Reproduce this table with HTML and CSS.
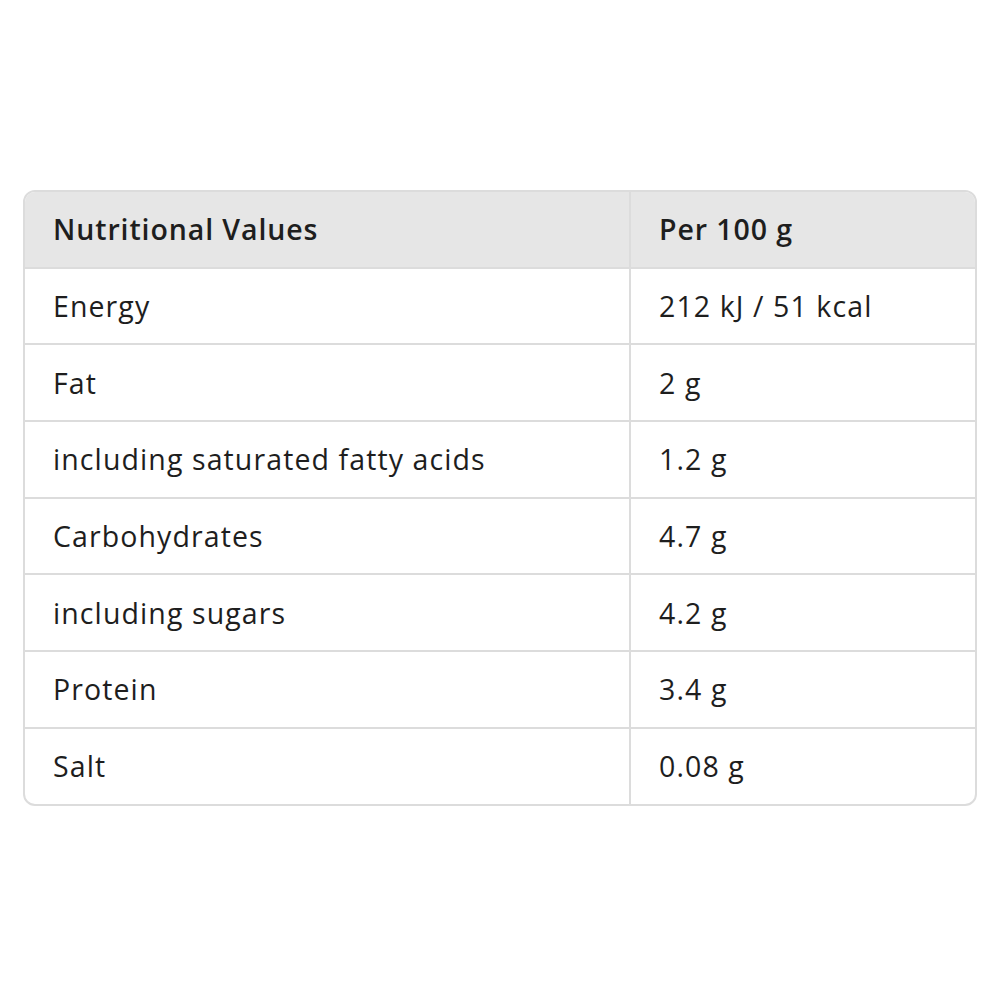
FILE: index.html
```html
<!DOCTYPE html>
<html>
<head>
<meta charset="utf-8">
<link rel="stylesheet" href="styles.css">
</head>
<body>
<div class="page">
  <div class="card">
    <table class="nutri">
      <thead>
        <tr><th class="c1">Nutritional Values</th><th class="c2">Per 100 g</th></tr>
      </thead>
      <tbody>
        <tr><td class="c1">Energy</td><td class="c2">212 kJ / 51 kcal</td></tr>
        <tr><td class="c1">Fat</td><td class="c2">2 g</td></tr>
        <tr><td class="c1">including saturated fatty acids</td><td class="c2">1.2 g</td></tr>
        <tr><td class="c1">Carbohydrates</td><td class="c2">4.7 g</td></tr>
        <tr><td class="c1">including sugars</td><td class="c2">4.2 g</td></tr>
        <tr><td class="c1">Protein</td><td class="c2">3.4 g</td></tr>
        <tr><td class="c1">Salt</td><td class="c2">0.08 g</td></tr>
      </tbody>
    </table>
  </div>
</div>
</body>
</html>
```

FILE: styles.css
```css
html, body {
  margin: 0;
  padding: 0;
  background: #ffffff;
}
.page {
  width: 1000px;
  height: 1000px;
  padding: 190px 23px 0 23px;
  box-sizing: border-box;
}
.card {
  border: 2px solid #dcdcdc;
  border-radius: 12px;
  overflow: hidden;
}
.nutri {
  width: 100%;
  border-collapse: collapse;
  font-family: "Open Sans", "Noto Sans", sans-serif;
  font-size: 28.5px;
  letter-spacing: 1.1px;
  color: #1e1e1e;
}
.nutri th, .nutri td {
  text-align: left;
  padding: 0 0 0 28px;
  height: 74.7px;
  border-top: 2px solid #dcdcdc;
}
.nutri th {
  background: #e6e6e6;
  font-weight: 600;
  letter-spacing: 0.9px;
  border-top: none;
}
.nutri .c1 {
  width: 576px;
  border-right: 2px solid #dcdcdc;
}
```
